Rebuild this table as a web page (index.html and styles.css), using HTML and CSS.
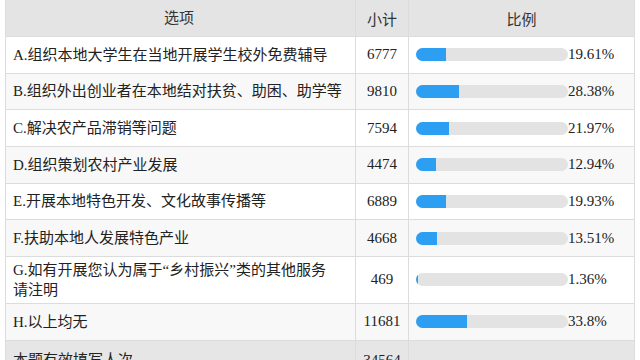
FILE: index.html
```html
<!DOCTYPE html>
<html lang="zh-CN">
<head>
<meta charset="utf-8">
<title>统计表</title>
<link rel="stylesheet" href="styles.css">
</head>
<body>
<div class="table">
  <div class="row head">
    <div class="cell opt center">选项</div>
    <div class="cell num">小计</div>
    <div class="cell center">比例</div>
  </div>
  <div class="row">
    <div class="cell opt">A.组织本地大学生在当地开展学生校外免费辅导</div>
    <div class="cell num">6777</div>
    <div class="cell ratio"><div class="track"><div class="fill" style="width:19.61%"></div></div><span>19.61%</span></div>
  </div>
  <div class="row alt">
    <div class="cell opt">B.组织外出创业者在本地结对扶贫、助困、助学等</div>
    <div class="cell num">9810</div>
    <div class="cell ratio"><div class="track"><div class="fill" style="width:28.38%"></div></div><span>28.38%</span></div>
  </div>
  <div class="row">
    <div class="cell opt">C.解决农产品滞销等问题</div>
    <div class="cell num">7594</div>
    <div class="cell ratio"><div class="track"><div class="fill" style="width:21.97%"></div></div><span>21.97%</span></div>
  </div>
  <div class="row alt">
    <div class="cell opt">D.组织策划农村产业发展</div>
    <div class="cell num">4474</div>
    <div class="cell ratio"><div class="track"><div class="fill" style="width:12.94%"></div></div><span>12.94%</span></div>
  </div>
  <div class="row">
    <div class="cell opt">E.开展本地特色开发、文化故事传播等</div>
    <div class="cell num">6889</div>
    <div class="cell ratio"><div class="track"><div class="fill" style="width:19.93%"></div></div><span>19.93%</span></div>
  </div>
  <div class="row alt">
    <div class="cell opt">F.扶助本地人发展特色产业</div>
    <div class="cell num">4668</div>
    <div class="cell ratio"><div class="track"><div class="fill" style="width:13.51%"></div></div><span>13.51%</span></div>
  </div>
  <div class="row tall">
    <div class="cell opt narrow">G.如有开展您认为属于“乡村振兴”类的其他服务请注明</div>
    <div class="cell num">469</div>
    <div class="cell ratio"><div class="track"><div class="fill" style="width:1.36%"></div></div><span>1.36%</span></div>
  </div>
  <div class="row alt">
    <div class="cell opt">H.以上均无</div>
    <div class="cell num">11681</div>
    <div class="cell ratio"><div class="track"><div class="fill" style="width:33.8%"></div></div><span>33.8%</span></div>
  </div>
  <div class="row total">
    <div class="cell opt">本题有效填写人次</div>
    <div class="cell num">34564</div>
    <div class="cell"></div>
  </div>
</div>
</body>
</html>
```

FILE: styles.css
```css
html, body {
  margin: 0;
  padding: 0;
  background: #ffffff;
}

body {
  font-family: "Liberation Serif", "Noto Sans CJK SC", serif;
  font-size: 15px;
  color: #222222;
  overflow: hidden;
}

.table {
  margin-left: 5px;
  width: 630px;
  box-sizing: border-box;
  border-left: 1px solid #dcdcdc;
  border-right: 1px solid #dcdcdc;
}

.row {
  display: grid;
  grid-template-columns: 350px 53px 225px;
  height: 36.67px;
  box-sizing: border-box;
  border-bottom: 1px solid #dcdcdc;
  background: #ffffff;
}

.row.head {
  height: 37px;
  background: #e4e4e4;
  color: #333333;
}

.row.alt {
  background: #f8f8f8;
}

.row.tall {
  height: 47px;
}

.row.total {
  background: #e6e6e6;
  height: 40px;
}

.cell {
  box-sizing: border-box;
  border-right: 1px solid #dcdcdc;
  display: flex;
  align-items: center;
  min-width: 0;
}

.cell:last-child {
  border-right: none;
}

.opt {
  padding: 0 10px 0 7px;
  line-height: 20px;
}

.opt.narrow {
  padding-right: 18px;
}

.center {
  justify-content: center;
}

.num {
  justify-content: center;
}

.ratio {
  padding-left: 7px;
}

.track {
  width: 152px;
  height: 13px;
  border-radius: 7px;
  background: #e3e3e3;
  overflow: hidden;
  flex: none;
}

.fill {
  height: 100%;
  background: #2d9ff3;
}
```
